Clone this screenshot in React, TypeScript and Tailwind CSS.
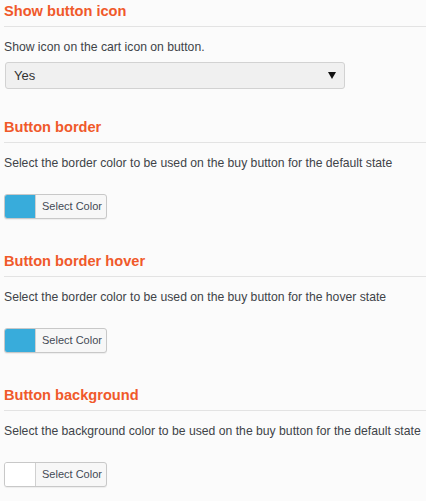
import React from 'react';

interface ColorSetting {
  title: string;
  description: string;
  color: string;
}

const colorSettings: ColorSetting[] = [
  {
    title: 'Button border',
    description: 'Select the border color to be used on the buy button for the default state',
    color: '#38acdb',
  },
  {
    title: 'Button border hover',
    description: 'Select the border color to be used on the buy button for the hover state',
    color: '#38acdb',
  },
  {
    title: 'Button background',
    description: 'Select the background color to be used on the buy button for the default state',
    color: '#ffffff',
  },
];

const Heading: React.FC<{ title: string }> = ({ title }) => (
  <h3 className="ml-[4px] border-b border-[#e3e3e3] pb-[4px] text-[14.6px] font-bold leading-[22px] text-[#f0592a]">
    {title}
  </h3>
);

const ColorPicker: React.FC<{ color: string }> = ({ color }) => (
  <div className="ml-[4px] flex h-[25px] w-[103px] overflow-hidden rounded-[3px] border border-[#c8c8c8] bg-[#f7f7f7] shadow-[0_1px_1px_rgba(0,0,0,0.06)]">
    <div className="w-[31px] border-r border-[#d0d0d0]" style={{ backgroundColor: color }} />
    <span className="flex-1 pl-[6px] text-[11px] leading-[23px] text-[#444a55]">Select Color</span>
  </div>
);

const App: React.FC = () => {
  return (
    <div className="h-[501px] w-[426px] overflow-hidden bg-[#fbfbfb] font-['Liberation_Sans',Arial,sans-serif]">
      {/* Show button icon */}
      <div>
        <Heading title="Show button icon" />
        <p className="ml-[4px] mt-[11px] text-[12.2px] leading-[18px] text-[#404348]">
          Show icon on the cart icon on button.
        </p>
        <div className="ml-[5px] mt-[6px] flex h-[27px] w-[340px] items-center justify-between rounded-[3px] border border-[#d2d2d2] bg-[#f0f0f0] pl-[8px] pr-[8px]">
          <span className="text-[13px] text-[#333]">Yes</span>
          <svg width="8" height="7" viewBox="0 0 8 7">
            <path d="M0 0H8L4 7Z" fill="#111" />
          </svg>
        </div>
      </div>

      {colorSettings.map((s, i) => (
        <div key={s.title} className={i === 0 ? 'mt-[27px]' : 'mt-[31px]'}>
          <Heading title={s.title} />
          <p className="ml-[4px] mt-[11px] text-[12.2px] leading-[18px] text-[#404348]">{s.description}</p>
          <div className="mt-[22px]">
            <ColorPicker color={s.color} />
          </div>
        </div>
      ))}
    </div>
  );
};

export default App;
